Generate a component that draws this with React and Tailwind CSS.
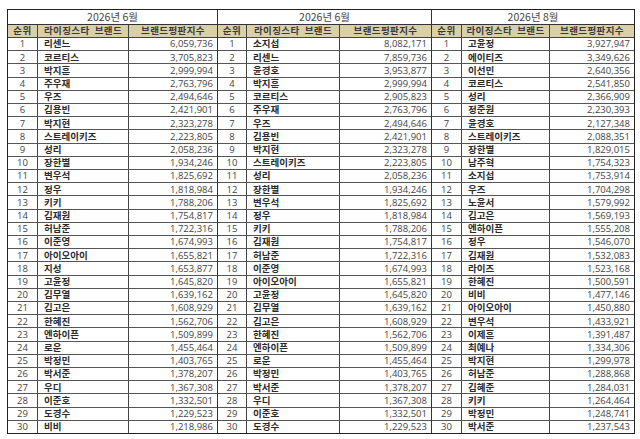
const t1 = [
  ["리센느", "6,059,736"], ["코르티스", "3,705,823"], ["박지훈", "2,999,994"], ["주우재", "2,763,796"],
  ["우즈", "2,494,646"], ["김용빈", "2,421,901"], ["박지현", "2,323,278"], ["스트레이키즈", "2,223,805"],
  ["성리", "2,058,236"], ["장한별", "1,934,246"], ["변우석", "1,825,692"], ["정우", "1,818,984"],
  ["키키", "1,788,206"], ["김재원", "1,754,817"], ["허남준", "1,722,316"], ["이준영", "1,674,993"],
  ["아이오아이", "1,655,821"], ["지성", "1,653,877"], ["고윤정", "1,645,820"], ["김무열", "1,639,162"],
  ["김고은", "1,608,929"], ["한혜진", "1,562,706"], ["엔하이픈", "1,509,899"], ["로운", "1,455,464"],
  ["박정민", "1,403,765"], ["박서준", "1,378,207"], ["우디", "1,367,308"], ["이준호", "1,332,501"],
  ["도경수", "1,229,523"], ["비비", "1,218,986"],
]

const t2 = [
  ["소지섭", "8,082,171"], ["리센느", "7,859,736"], ["윤경호", "3,953,877"], ["박지훈", "2,999,994"],
  ["코르티스", "2,905,823"], ["주우재", "2,763,796"], ["우즈", "2,494,646"], ["김용빈", "2,421,901"],
  ["박지현", "2,323,278"], ["스트레이키즈", "2,223,805"], ["성리", "2,058,236"], ["장한별", "1,934,246"],
  ["변우석", "1,825,692"], ["정우", "1,818,984"], ["키키", "1,788,206"], ["김재원", "1,754,817"],
  ["허남준", "1,722,316"], ["이준영", "1,674,993"], ["아이오아이", "1,655,821"], ["고윤정", "1,645,820"],
  ["김무열", "1,639,162"], ["김고은", "1,608,929"], ["한혜진", "1,562,706"], ["엔하이픈", "1,509,899"],
  ["로운", "1,455,464"], ["박정민", "1,403,765"], ["박서준", "1,378,207"], ["우디", "1,367,308"],
  ["이준호", "1,332,501"], ["도경수", "1,229,523"],
]

const t3 = [
  ["고윤정", "3,927,947"], ["에이티즈", "3,349,626"], ["이선민", "2,640,356"], ["코르티스", "2,541,850"],
  ["성리", "2,366,909"], ["정준원", "2,230,393"], ["윤경호", "2,127,348"], ["스트레이키즈", "2,088,351"],
  ["장한별", "1,829,015"], ["남주혁", "1,754,323"], ["소지섭", "1,753,914"], ["우즈", "1,704,298"],
  ["노윤서", "1,579,992"], ["김고은", "1,569,193"], ["엔하이픈", "1,555,208"], ["정우", "1,546,070"],
  ["김재원", "1,532,083"], ["라이즈", "1,523,168"], ["한혜진", "1,500,591"], ["비비", "1,477,146"],
  ["아이오아이", "1,450,880"], ["변우석", "1,433,921"], ["이제훈", "1,391,487"], ["최예나", "1,334,306"],
  ["박지현", "1,299,978"], ["허남준", "1,288,868"], ["김혜준", "1,284,031"], ["키키", "1,264,464"],
  ["박정민", "1,248,741"], ["박서준", "1,237,543"],
]

const kr = "font-['Noto_Sans_CJK_KR',sans-serif]"
const num = "font-['Open_Sans','Noto_Sans_CJK_KR',sans-serif]"

function RankTable({ title, rows, cols, width, first }) {
  return (
    <div className={`flex flex-col ${width} ${first ? "" : "border-l border-[#333]"}`}>
      <div className={`h-[15px] flex items-center justify-center border-b border-[#333] text-[10.5px] text-[#444] leading-none ${kr}`}>
        {title}
      </div>
      <div className={`h-[13px] grid ${cols} bg-[#d9d0a9] border-b border-[#444] text-[9.5px] font-bold text-[#3a3a3a] leading-none tracking-[0.4px] ${kr}`}>
        <div className="flex items-center justify-center border-r border-[#444]">순위</div>
        <div className="flex items-center justify-center border-r border-[#444]">라이징스타&nbsp;&nbsp;브랜드</div>
        <div className="flex items-center justify-center">브랜드평판지수</div>
      </div>
      <div className="h-[395px] flex flex-col">
        {rows.map((r, i) => (
          <div
            key={i}
            className={`flex-1 grid ${cols} leading-none ${i < rows.length - 1 ? "border-b border-[#555]" : ""}`}
          >
            <div className={`flex items-center justify-center border-r border-[#444] text-[9.5px] text-[#444] ${num}`}>
              {i + 1}
            </div>
            <div className={`flex items-center pl-[6px] border-r border-[#444] text-[9.5px] font-bold text-[#2a2a2a] ${kr}`}>
              {r[0]}
            </div>
            <div className={`flex items-center justify-end pr-[4px] text-[9.5px] text-[#444] ${num}`}>
              {r[1]}
            </div>
          </div>
        ))}
      </div>
    </div>
  )
}

export default function App() {
  return (
    <div className="w-[640px] h-[439px] bg-white pt-[9px] pl-[7px]">
      <div className="flex w-fit border border-[#222]">
        <RankTable first title="2026년 6월" rows={t1} width="w-[209px]" cols="grid-cols-[30px_91px_1fr]" />
        <RankTable title="2026년 6월" rows={t2} width="w-[214px]" cols="grid-cols-[29px_93px_1fr]" />
        <RankTable title="2026년 8월" rows={t3} width="w-[203px]" cols="grid-cols-[30px_88px_1fr]" />
      </div>
    </div>
  )
}
